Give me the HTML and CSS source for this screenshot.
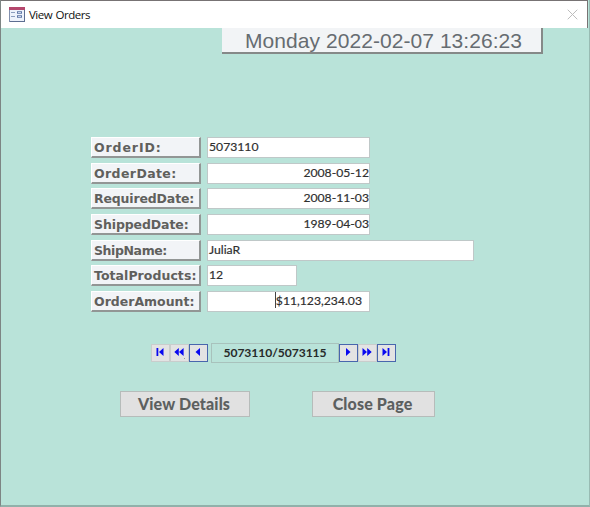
FILE: index.html
```html
<!DOCTYPE html>
<html lang="en">
<head>
<meta charset="utf-8">
<title>View Orders</title>
<link rel="stylesheet" href="styles.css">
</head>
<body>
<div class="window">
  <header class="titlebar">
    <svg class="form-icon" width="16" height="15" viewBox="0 0 16 15">
      <rect x=".5" y=".5" width="15" height="14" fill="#edf2fb" stroke="#8290ae"/>
      <rect width="16" height="3" fill="#b5476d"/>
      <path d="M2 5.5h4M2 9.5h4" stroke="#8b9dbd"/>
      <path d="M8 5.5h5M8 9.5h5" stroke="#5d76a5" stroke-width="2.6"/>
      <path d="M9 5.5h3M9 9.5h3" stroke="#c5d2e8"/>
      <path d="M1 14.5h15M15.5 3v12" stroke="#5d6e91"/>
    </svg>
    <h1 class="title">View Orders</h1>
    <svg class="close" width="11" height="11" viewBox="0 0 11 11"><path d="M.7.7l9.6 9.6M10.3.7L.7 10.3" stroke="#bdbdbd" fill="none"/></svg>
  </header>
  <main class="form">
    <div class="clock">Monday 2022-02-07 13:26:23</div>
    <div class="fields">
      <div class="row"><label class="label"><span class="l-id">OrderID:</span></label><div class="field">5073110</div></div>
      <div class="row"><label class="label"><span class="l-date">OrderDate:</span></label><div class="field right">2008-05-12</div></div>
      <div class="row"><label class="label"><span class="l-req">RequiredDate:</span></label><div class="field right">2008-11-03</div></div>
      <div class="row"><label class="label"><span class="l-shipped">ShippedDate:</span></label><div class="field right">1989-04-03</div></div>
      <div class="row"><label class="label"><span class="l-name">ShipName:</span></label><div class="field wide">JuliaR</div></div>
      <div class="row"><label class="label"><span class="l-total">TotalProducts:</span></label><div class="field short">12</div></div>
      <div class="row"><label class="label"><span class="l-amount">OrderAmount:</span></label><div class="field right amount"><span class="caret"></span>$11,123,234.03</div></div>
    </div>
    <nav class="pager">
      <button class="step" aria-label="First"><svg width="8" height="8" viewBox="0 0 8 8"><path d="M.5 0h1.8v8H.5zM7.5 0v8L3 4z"/></svg></button>
      <button class="step dotted" aria-label="Back"><svg width="10" height="8" viewBox="0 0 10 8"><path d="M4.8 0v8L.3 4zM9.6 0v8L5 4z"/></svg></button>
      <button class="step active" aria-label="Previous"><svg width="8" height="8" viewBox="0 0 8 8"><path d="M6 0v8L1.5 4z"/></svg></button>
      <div class="position">5073110/5073115</div>
      <button class="step active" aria-label="Next"><svg width="8" height="8" viewBox="0 0 8 8"><path d="M2 0v8l4.5-4z"/></svg></button>
      <button class="step" aria-label="Forward"><svg width="10" height="8" viewBox="0 0 10 8"><path d="M.5 0v8L5 4zM5.2 0v8l4.5-4z"/></svg></button>
      <button class="step active" aria-label="Last"><svg width="8" height="8" viewBox="0 0 8 8"><path d="M.5 0v8L5 4zM5.6 0h1.8v8H5.6z"/></svg></button>
    </nav>
    <div class="actions">
      <button class="action details">View Details</button>
      <button class="action page">Close Page</button>
    </div>
  </main>
</div>
</body>
</html>
```
FILE: styles.css
```css
* { box-sizing: border-box; }
body { margin: 0; background: #b9e3d9; font-family: Lato, "Liberation Sans", sans-serif; overflow: hidden; }
button { margin: 0; padding: 0; font-family: inherit; }
.window { width: 590px; height: 507px; border-left: 1px solid #7d8584; border-right: 1px solid #98bbb3; border-bottom: 2px solid #91b1aa; background: #b9e3d9; }
.titlebar { display: flex; align-items: center; width: 587px; height: 28px; padding: 0 9px 0 8px; background: #fff; border-top: 1px solid #777374; border-right: 1px solid #777374; }
.form-icon { margin-top: -1px; }
.title { flex: 1; margin: 0 0 0 4px; font: 400 11.5px/16px "Open Sans", sans-serif; letter-spacing: -0.5px; word-spacing: 1px; color: #111; }
.clock { width: 321px; height: 26px; margin-left: 221px; padding-left: 23px; background: #f2f4f6; border-right: 2px solid #858988; border-bottom: 2px solid #858988; font: 21px/26px "Liberation Sans", sans-serif; letter-spacing: .06px; color: #666c71; white-space: nowrap; }
.fields { display: grid; gap: 4.7px; margin: 83px 0 0 90px; }
.row { display: flex; gap: 6px; height: 21px; }
.label { width: 110px; height: 21px; padding-left: 2px; background: #f2f4f7; border: 1px solid #fff; border-right: 2px solid #929695; border-bottom: 2px solid #929695; font: 700 12.5px/19px "DejaVu Sans", sans-serif; color: #60605d; white-space: nowrap; }
.l-id { letter-spacing: .9px; }
.l-date { letter-spacing: .4px; }
.l-req { letter-spacing: -.15px; }
.l-shipped { letter-spacing: -.1px; }
.l-name { letter-spacing: -.4px; }
.l-total { letter-spacing: .05px; }
.l-amount { letter-spacing: 0; }
.field { width: 163px; height: 21px; padding: 0 1px; border: 1px solid #bfc8c8; background: #fff; font-size: 12.2px; line-height: 18px; color: #303030; -webkit-text-stroke: .2px #303030; }
.right { text-align: right; padding-right: 0; }
.wide { width: 267px; }
.short { width: 90px; }
.amount { display: flex; justify-content: flex-end; padding-right: 7px; }
.caret { width: 1px; height: 16px; background: #444; }
.pager { display: flex; align-items: center; height: 19px; margin: 31px 0 0 150px; }
.step { display: flex; align-items: center; justify-content: center; width: 19px; height: 18px; padding: 0 2px 2px 0; border: 1px solid #c9cdcc; background: #e3e3e3; }
.step svg { flex: none; fill: #0808f0; display: block; }
.dotted { position: relative; }
.dotted::after { content: ""; position: absolute; right: 3px; bottom: 2px; width: 1px; height: 1px; background: #999; }
.active { border-color: #4866ad; }
.position { width: 128px; height: 20px; margin-left: 3px; border: 1px solid #a8c2bc; font-size: 12.1px; font-weight: 700; line-height: 17px; letter-spacing: -.05px; text-align: center; color: #272b2a; }
.actions { display: flex; gap: 62px; margin: 29px 0 0 119px; }
.action { height: 26px; padding: 0 2px 1px 0; border: 1px solid #b6bcba; background: #e1e1e1; color: #5c6060; font-size: 16px; font-weight: 900; line-height: 22px; letter-spacing: .15px; }
.details { width: 130px; }
.page { width: 123px; }
```
